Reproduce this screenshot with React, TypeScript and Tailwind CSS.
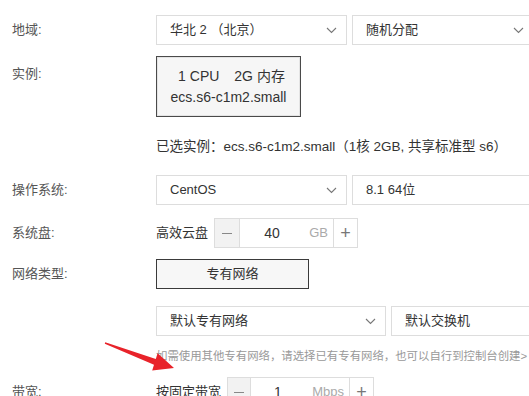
import React from "react";

const FONT = { fontFamily: '"Liberation Sans", "Noto Sans CJK SC", sans-serif' };

function Chevron() {
  return (
    <svg width="11" height="7" viewBox="0 0 11 7" className="shrink-0">
      <polyline points="1,1 5.5,5.5 10,1" fill="none" stroke="#777" strokeWidth="1.1" />
    </svg>
  );
}

function Select({ value, className, arrow = true }: { value: string; className: string; arrow?: boolean }) {
  return (
    <div className={`shrink-0 h-[30px] border border-[#dddddd] bg-white flex items-center justify-between pl-[13px] pr-[9px] text-[#333] ${className}`}>
      <span>{value}</span>
      {arrow && <Chevron />}
    </div>
  );
}

function Label({ children, className = "" }: { children: React.ReactNode; className?: string }) {
  return <div className={`w-[156px] shrink-0 pl-[12px] text-[#555] ${className}`}>{children}</div>;
}

function Stepper({
  value,
  unit,
  minusW,
  numW,
  inputW,
}: {
  value: string;
  unit: string;
  minusW: string;
  numW: string;
  inputW: string;
}) {
  return (
    <div className="shrink-0 flex h-[30px] border border-[#dddddd] bg-white">
      <div className={`${minusW} bg-[#f2f2f2] border-r border-[#dddddd] flex items-center justify-center`}>
        <div className="w-[10px] h-px bg-[#888]" />
      </div>
      <div className={`${inputW} flex items-center justify-between pr-[5px]`}>
        <span className={`${numW} text-center text-[#333] text-[14px]`}>{value}</span>
        <span className="text-[#aaa]">{unit}</span>
      </div>
      <div className="w-[24px] border-l border-[#dddddd] flex items-center justify-center text-[#777] text-[18px] font-light">
        +
      </div>
    </div>
  );
}

export default function App() {
  return (
    <div className="relative w-[529px] h-[396px] overflow-hidden bg-white text-[13px]" style={FONT}>
      <div className="flex flex-col pt-[15px]">
        {/* 地域 */}
        <div className="flex items-center h-[30px]">
          <Label>地域:</Label>
          <Select value="华北 2 （北京）" className="w-[191px]" />
          <Select value="随机分配" className="w-[182px] ml-[5px]" />
        </div>

        {/* 实例 */}
        <div className="flex items-start mt-[11px]">
          <Label className="pt-[8px]">实例:</Label>
          <div className="w-[145px] h-[61px] border border-[#4a4a4a] bg-[#f6f6f6] flex flex-col items-center justify-center gap-[5px] text-[#333] shadow-[inset_0_0_0_1px_#e4e4e4]">
            <div className="flex gap-[15px] pl-[6px] text-[14px] leading-[16px]">
              <span>1 CPU</span>
              <span>2G 内存</span>
            </div>
            <div className="text-[14px] leading-[16px]">ecs.s6-c1m2.small</div>
          </div>
        </div>

        <div className="mt-[22px] pl-[156px] leading-[16px] text-[13.5px] text-[#333] whitespace-nowrap">
          已选实例：ecs.s6-c1m2.small（1核 2GB, 共享标准型 s6）
        </div>

        {/* 操作系统 */}
        <div className="flex items-center h-[30px] mt-[20px]">
          <Label>操作系统:</Label>
          <Select value="CentOS" className="w-[191px]" />
          <Select value="8.1 64位" className="w-[182px] ml-[5px]" arrow={false} />
        </div>

        {/* 系统盘 */}
        <div className="flex items-center h-[30px] mt-[13px]">
          <Label>系统盘:</Label>
          <span className="text-[#333] mr-[6px]">高效云盘</span>
          <Stepper value="40" unit="GB" minusW="w-[25px]" inputW="w-[93px]" numW="w-[64px]" />
        </div>

        {/* 网络类型 */}
        <div className="flex items-center h-[30px] mt-[11px]">
          <Label>网络类型:</Label>
          <div className="w-[153px] h-[30px] border border-[#3a3a3a] bg-[#f7f7f7] flex items-center justify-center text-[#333]">
            专有网络
          </div>
        </div>

        {/* VPC */}
        <div className="flex items-center h-[30px] mt-[17px]">
          <div className="w-[156px] shrink-0" />
          <Select value="默认专有网络" className="w-[230px]" />
          <Select value="默认交换机" className="w-[160px] ml-[5px]" arrow={false} />
        </div>

        <div className="mt-[12px] pl-[156px] leading-[16px] text-[11.4px] text-[#999] whitespace-nowrap">
          如需使用其他专有网络，请选择已有专有网络，也可以自行到控制台创建&gt;
        </div>

        {/* 带宽 */}
        <div className="flex items-center h-[30px] mt-[13px]">
          <Label>带宽:</Label>
          <span className="text-[#333] mr-[6px]">按固定带宽</span>
          <Stepper value="1" unit="Mbps" minusW="w-[23px]" inputW="w-[98px]" numW="w-[54px]" />
        </div>
      </div>

      {/* red annotation arrow */}
      <svg className="absolute left-0 top-0 pointer-events-none" width="529" height="396">
        <polygon
          points="105.2,342.2 155.8,359 157.6,353.3 174,368 152.2,370.5 154,364.8 104.8,343.8"
          fill="#e8232a"
        />
      </svg>
    </div>
  );
}
